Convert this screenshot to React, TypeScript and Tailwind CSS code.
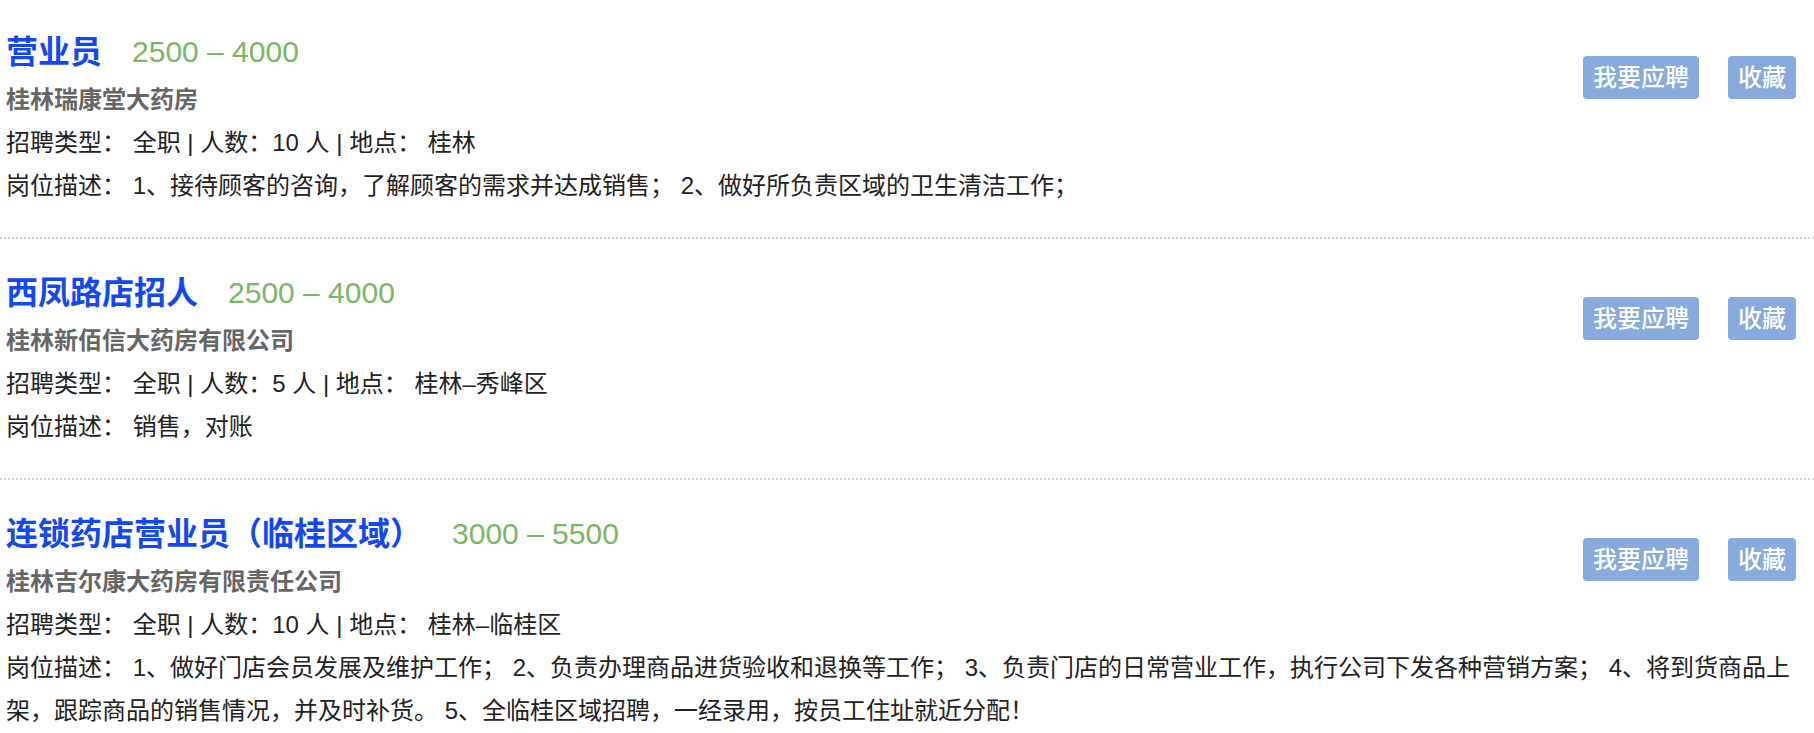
import React from 'react';

interface Job {
  title: string;
  salary: string;
  company: string;
  count: string;
  place: string;
  desc: string;
}

const jobs: Job[] = [
  {
    title: '营业员',
    salary: '2500 – 4000',
    company: '桂林瑞康堂大药房',
    count: '10',
    place: '桂林',
    desc: '1、接待顾客的咨询，了解顾客的需求并达成销售； 2、做好所负责区域的卫生清洁工作；',
  },
  {
    title: '西凤路店招人',
    salary: '2500 – 4000',
    company: '桂林新佰信大药房有限公司',
    count: '5',
    place: '桂林–秀峰区',
    desc: '销售，对账',
  },
  {
    title: '连锁药店营业员（临桂区域）',
    salary: '3000 – 5500',
    company: '桂林吉尔康大药房有限责任公司',
    count: '10',
    place: '桂林–临桂区',
    desc: '1、做好门店会员发展及维护工作； 2、负责办理商品进货验收和退换等工作； 3、负责门店的日常营业工作，执行公司下发各种营销方案； 4、将到货商品上架，跟踪商品的销售情况，并及时补货。 5、全临桂区域招聘，一经录用，按员工住址就近分配！',
  },
];

const JobItem: React.FC<{ job: Job; first?: boolean }> = ({ job, first }) => {
  return (
    <div
      className={`${first ? 'pt-[26px]' : 'pt-[28px]'} pb-[30px] pl-[6px] pr-[6px] border-b-2 border-dotted border-[#d2d2d2] flow-root`}
    >
      <div className="float-right mt-[30px] mr-[12px] flex gap-[29px]">
        <button className="h-[43px] px-[10px] rounded-[4px] bg-[#86abdc] text-white text-[24px] leading-[43px] font-medium">
          我要应聘
        </button>
        <button className="h-[43px] px-[10px] rounded-[4px] bg-[#86abdc] text-white text-[24px] leading-[43px] font-medium">
          收藏
        </button>
      </div>
      <div className="flex items-center h-[52px] leading-[52px]">
        <span className="text-[32px] font-bold text-[#1448ef]">{job.title}</span>
        <span className="ml-[30px] text-[30px] text-[#79b767]">{job.salary}</span>
      </div>
      <div className="text-[24px] leading-[43px] font-bold text-[#666666]">{job.company}</div>
      <div className="text-[24px] leading-[43px] text-[#222222]">
        招聘类型： 全职 | 人数：{job.count} 人 | 地点： {job.place}
      </div>
      <div className="text-[24px] leading-[43px] text-[#222222]">岗位描述： {job.desc}</div>
    </div>
  );
};

export default function App() {
  return (
    <div
      className="w-[1814px] h-[733px] overflow-hidden bg-white"
      style={{ fontFamily: '"Liberation Sans", "Noto Sans CJK SC", sans-serif' }}
    >
      {jobs.map((job, i) => (
        <JobItem key={i} job={job} first={i === 0} />
      ))}
    </div>
  );
}
